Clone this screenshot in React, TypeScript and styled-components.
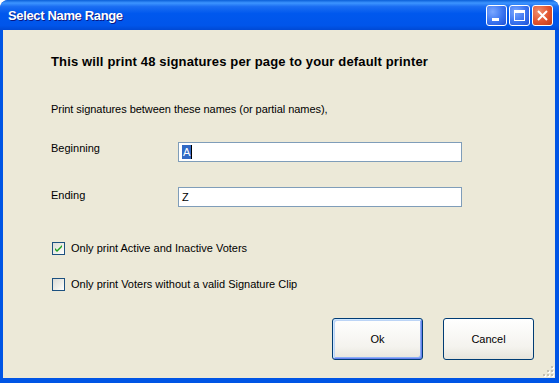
import React from "react";
import styled, { createGlobalStyle } from "styled-components";

const GlobalStyle = createGlobalStyle`
  html, body {
    margin: 0;
    padding: 0;
    background: #ffffff;
  }
  body {
    font-family: "Liberation Sans", Arial, sans-serif;
  }
`;

const Window = styled.div`
  width: 559px;
  height: 383px;
  display: flex;
  flex-direction: column;
  background: #0055e5;
  border-radius: 8px 8px 0 0;
  overflow: hidden;
  box-sizing: border-box;
`;

const TitleBar = styled.div`
  height: 30px;
  flex: none;
  display: flex;
  align-items: center;
  padding: 0 6px 0 8px;
  background: linear-gradient(
    to bottom,
    #0a5fd8 0%,
    #3d95ff 10%,
    #1b6ef2 22%,
    #0058ee 45%,
    #0055ea 85%,
    #0049d4 100%
  );
  border-radius: 8px 8px 0 0;
`;

const Title = styled.div`
  flex: 1;
  color: #ffffff;
  font-family: "Liberation Sans", Arial, sans-serif;
  font-weight: bold;
  font-size: 13px;
  text-shadow: 1px 1px 0 #0a1883;
  letter-spacing: -0.35px;
`;

const Controls = styled.div`
  display: flex;
  gap: 2px;
`;

const CtrlButton = styled.div<{ $close?: boolean }>`
  width: 21px;
  height: 21px;
  box-sizing: border-box;
  border: 1px solid #ffffff;
  border-radius: 3px;
  display: flex;
  align-items: center;
  justify-content: center;
  background: ${(p) =>
    p.$close
      ? "radial-gradient(circle at 30% 30%, #f09070 0%, #e2532e 55%, #c03a18 100%)"
      : "radial-gradient(circle at 30% 30%, #7aa7ff 0%, #3a74f0 55%, #1d50d6 100%)"};
`;

const Body = styled.div`
  flex: 1;
  position: relative;
  margin: 0 4px 5px 3px;
  background: #ece9d8;
  display: flex;
  flex-direction: column;
  padding: 24px 0 0 48px;
  color: #000000;
`;

const Heading = styled.div`
  font-weight: bold;
  font-size: 13px;
  line-height: 16px;
  letter-spacing: 0.15px;
`;

const Text = styled.div`
  font-size: 11px;
  line-height: 13px;
  margin-top: 33px;
  letter-spacing: -0.05px;
`;

const Fields = styled.div`
  display: grid;
  grid-template-columns: 127px 284px;
  row-gap: 25px;
  margin-top: 26px;
`;

const Label = styled.div<{ $drop?: number }>`
  font-size: 11px;
  line-height: 13px;
  padding-top: ${(p) => p.$drop ?? 0}px;
`;

const Input = styled.div`
  height: 20px;
  box-sizing: border-box;
  border: 1px solid #7f9db9;
  background: #ffffff;
  display: flex;
  align-items: center;
  padding-left: 3px;
  font-size: 11px;
`;

const Selected = styled.span`
  background: #316ac5;
  color: #ffffff;
  line-height: 14px;
  padding: 0 1px;
  border-right: 1px solid #000000;
`;

const Checks = styled.div`
  display: flex;
  flex-direction: column;
  gap: 23px;
  margin-top: 35px;
  padding-left: 1px;
`;

const CheckRow = styled.div`
  display: flex;
  align-items: center;
  gap: 6px;
  font-size: 11px;
  line-height: 13px;
`;

const Box = styled.div`
  width: 13px;
  height: 13px;
  box-sizing: border-box;
  border: 1px solid #1c5180;
  background: linear-gradient(135deg, #dcdcd7 0%, #f0f0ea 60%, #ffffff 100%);
  display: flex;
  align-items: center;
  justify-content: center;
`;

const Buttons = styled.div`
  display: flex;
  justify-content: flex-end;
  gap: 20px;
  margin-top: 27px;
  padding-right: 21px;
`;

const PushButton = styled.div<{ $default?: boolean }>`
  width: 91px;
  height: 42px;
  box-sizing: border-box;
  border: 1px solid #003c74;
  border-radius: 3px;
  background: linear-gradient(to bottom, #ffffff 0%, #f4f3ee 70%, #e6e4dc 100%);
  display: flex;
  align-items: center;
  justify-content: center;
  font-size: 11px;
  box-shadow: ${(p) =>
    p.$default
      ? "inset 1px 1px 0 #cee7ff, inset -1px -1px 0 #6982ee, inset 2px 2px 0 #bcd4f6, inset -2px -2px 0 #89adf4"
      : "none"};
`;

const Grip = styled.svg`
  position: absolute;
  right: 1px;
  bottom: 1px;
`;

function Check() {
  return (
    <svg width="9" height="9" viewBox="0 0 9 9">
      <path d="M1 4 L3 6 L8 1 L8 3 L3 8 L1 6 Z" fill="#21a121" />
    </svg>
  );
}

export default function App() {
  const dots = [
    [10, 2],
    [6, 6],
    [10, 6],
    [2, 10],
    [6, 10],
    [10, 10],
  ];
  return (
    <>
      <GlobalStyle />
      <Window>
        <TitleBar>
          <Title>Select Name Range</Title>
          <Controls>
            <CtrlButton>
              <svg width="19" height="19" viewBox="0 0 19 19">
                <rect x="5" y="12" width="7" height="3" fill="#ffffff" />
              </svg>
            </CtrlButton>
            <CtrlButton>
              <svg width="19" height="19" viewBox="0 0 19 19">
                <rect x="4.5" y="4.5" width="10" height="10" fill="none" stroke="#ffffff" />
                <rect x="4" y="4" width="11" height="3" fill="#ffffff" />
              </svg>
            </CtrlButton>
            <CtrlButton $close>
              <svg width="19" height="19" viewBox="0 0 19 19">
                <path d="M5 5 L14 14 M14 5 L5 14" stroke="#ffffff" strokeWidth="2" />
              </svg>
            </CtrlButton>
          </Controls>
        </TitleBar>
        <Body>
          <Heading>This will print 48 signatures per page to your default printer</Heading>
          <Text>Print signatures between these names (or partial names),</Text>
          <Fields>
            <Label>Beginning</Label>
            <Input>
              <Selected>A</Selected>
            </Input>
            <Label $drop={2}>Ending</Label>
            <Input>Z</Input>
          </Fields>
          <Checks>
            <CheckRow>
              <Box>
                <Check />
              </Box>
              Only print Active and Inactive Voters
            </CheckRow>
            <CheckRow>
              <Box />
              Only print Voters without a valid Signature Clip
            </CheckRow>
          </Checks>
          <Buttons>
            <PushButton $default>Ok</PushButton>
            <PushButton>Cancel</PushButton>
          </Buttons>
          <Grip width="13" height="13" viewBox="0 0 13 13">
            {dots.map(([x, y]) => (
              <g key={`${x}-${y}`}>
                <rect x={x + 1} y={y + 1} width="2" height="2" fill="#ffffff" />
                <rect x={x} y={y} width="2" height="2" fill="#c3c0b3" />
              </g>
            ))}
          </Grip>
        </Body>
      </Window>
    </>
  );
}
